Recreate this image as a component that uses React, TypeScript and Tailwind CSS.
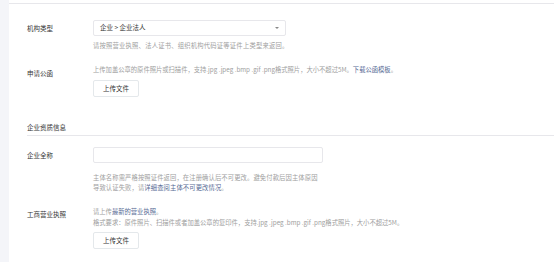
import React from "react";

const font = { fontFamily: '"Noto Sans CJK SC", "Noto Sans", sans-serif' };

function Label({ children, className = "" }: { children: React.ReactNode; className?: string }) {
  return (
    <div className={`w-[66px] shrink-0 text-[6.5px] leading-[10px] text-[#353535] ${className}`}>{children}</div>
  );
}

function UploadBtn() {
  return (
    <div className="w-[46px] h-[17px] border border-[#e4e8eb] rounded-[2px] bg-white flex items-center justify-center text-[6.5px] text-[#353535]">
      上传文件
    </div>
  );
}

export default function App() {
  return (
    <div className="w-[554px] h-[262px] flex bg-white overflow-hidden" style={font}>
      <div className="w-[9px] h-full bg-[#f4f5f9] shrink-0" />
      <div className="flex-1 mt-[3px] border-t border-[#e7e7eb] pl-[18px]">
        {/* 机构类型 */}
        <div className="flex items-center mt-[16px]">
          <Label>机构类型</Label>
          <div className="w-[193px] h-[16px] border border-[#e7e7eb] rounded-[2px] flex items-center justify-between pl-[6px] pr-[6px]">
            <span className="text-[6.5px] text-[#353535] whitespace-nowrap">企业 &gt; 企业法人</span>
            <span className="w-0 h-0 border-l-[2px] border-r-[2px] border-t-[2.5px] border-l-transparent border-r-transparent border-t-[#888]" />
          </div>
        </div>
        <div className="ml-[66px] mt-[5px] text-[6.3px] leading-[10px] tracking-[0.22px] text-[#a0a0a0] whitespace-nowrap">
          请按照营业执照、法人证书、组织机构代码证等证件上类型来返回。
        </div>

        {/* 申请公函 */}
        <div className="flex mt-[14px]">
          <Label className="pt-[3px]">申请公函</Label>
          <div>
            <div className="text-[6.3px] leading-[10px] text-[#a0a0a0] whitespace-nowrap">
              上传加盖公章的原件照片或扫描件，支持.jpg .jpeg .bmp .gif .png格式照片，大小不超过5M。
              <span className="text-[#576b95]">下载公函模板</span>。
            </div>
            <div className="mt-[5px]">
              <UploadBtn />
            </div>
          </div>
        </div>

        {/* 企业资质信息 */}
        <div className="mt-[25px] pb-[3px] border-b border-[#e7e7eb] text-[6.5px] leading-[10px] text-[#353535]">
          企业资质信息
        </div>

        {/* 企业全称 */}
        <div className="flex items-center mt-[11px]">
          <Label>企业全称</Label>
          <div className="w-[230px] h-[16px] border border-[#e7e7eb] rounded-[2px]" />
        </div>
        <div className="ml-[66px] mt-[10px] text-[6.3px] leading-[10px] tracking-[0.12px] text-[#a0a0a0] whitespace-nowrap">
          主体名称需严格按照证件返回，在注册确认后不可更改。避免付款后因主体原因
          <br />
          导致认证失败，请<span className="text-[#576b95]">详细查阅主体不可更改情况</span>。
        </div>

        {/* 工商营业执照 */}
        <div className="flex mt-[13px]">
          <Label className="pt-[3px]">工商营业执照</Label>
          <div>
            <div className="text-[6.3px] leading-[11px] text-[#a0a0a0] whitespace-nowrap">
              请上传<span className="text-[#576b95]">最新的营业执照</span>。
              <br />
              格式要求：原件照片、扫描件或者加盖公章的复印件，支持.jpg .jpeg .bmp .gif .png格式照片，大小不超过5M。
            </div>
            <div className="mt-[4px]">
              <UploadBtn />
            </div>
          </div>
        </div>
      </div>
    </div>
  );
}
